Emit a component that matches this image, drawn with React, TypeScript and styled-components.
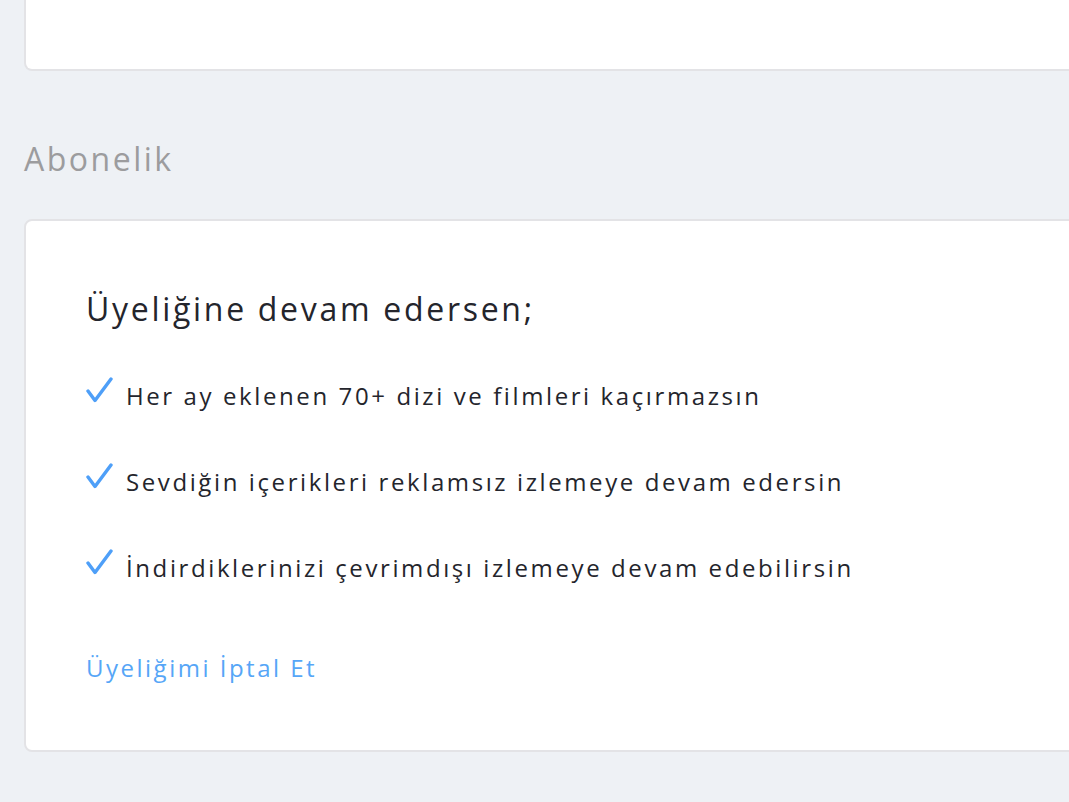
import React from "react";
import styled, { createGlobalStyle } from "styled-components";

const GlobalStyle = createGlobalStyle`
  html, body {
    margin: 0;
    padding: 0;
    background: #eef1f5;
    overflow: hidden;
  }
  body {
    font-family: "Open Sans", "Noto Sans", sans-serif;
  }
`;

const Page = styled.div`
  width: 1200px;
  height: 802px;
  padding-left: 24px;
  box-sizing: border-box;
`;

const Card = styled.div<{ $top?: boolean }>`
  background: #ffffff;
  border: 2px solid #e3e3e6;
  border-radius: 8px;
  box-sizing: border-box;
  ${(p) =>
    p.$top &&
    `
    border-top: none;
    border-radius: 0 0 8px 8px;
    height: 71px;
  `}
`;

const SectionTitle = styled.h2`
  margin: 0;
  padding: 67px 0 39px;
  font-size: 32px;
  font-weight: 400;
  line-height: 42px;
  color: #9c9c9e;
  letter-spacing: 2.5px;
`;

const Body = styled.div`
  padding: 68px 0 66px 60px;
`;

const Heading = styled.h3`
  margin: 0 0 51px;
  font-size: 32px;
  font-weight: 400;
  line-height: 40px;
  color: #24252c;
  letter-spacing: 2.7px;
`;

const List = styled.ul`
  list-style: none;
  margin: 0;
  padding: 0;
  display: flex;
  flex-direction: column;
  gap: 54px;
`;

const Item = styled.li`
  display: flex;
  align-items: center;
  gap: 13px;
  font-size: 24px;
  line-height: 32px;
  color: #24252c;
  letter-spacing: 2.6px;
  & > svg {
    flex: none;
    margin-top: -12px;
  }
`;

const CancelLink = styled.a`
  display: block;
  margin-top: 68px;
  font-size: 24px;
  line-height: 32px;
  color: #56a6f7;
  letter-spacing: 2.5px;
  text-decoration: none;
  cursor: pointer;
`;

const Check = () => (
  <svg width="27" height="26" viewBox="0 0 27 26">
    <path
      d="M2 14 L9 23.5 L25 2"
      fill="none"
      stroke="#4e9ff8"
      strokeWidth="3.4"
      strokeLinecap="round"
      strokeLinejoin="round"
    />
  </svg>
);

const benefits = [
  "Her ay eklenen 70+ dizi ve filmleri kaçırmazsın",
  "Sevdiğin içerikleri reklamsız izlemeye devam edersin",
  "İndirdiklerinizi çevrimdışı izlemeye devam edebilirsin",
];

export default function App() {
  return (
    <Page>
      <GlobalStyle />
      <Card $top />
      <SectionTitle>Abonelik</SectionTitle>
      <Card>
        <Body>
          <Heading>Üyeliğine devam edersen;</Heading>
          <List>
            {benefits.map((b) => (
              <Item key={b}>
                <Check />
                <span>{b}</span>
              </Item>
            ))}
          </List>
          <CancelLink>Üyeliğimi İptal Et</CancelLink>
        </Body>
      </Card>
    </Page>
  );
}
